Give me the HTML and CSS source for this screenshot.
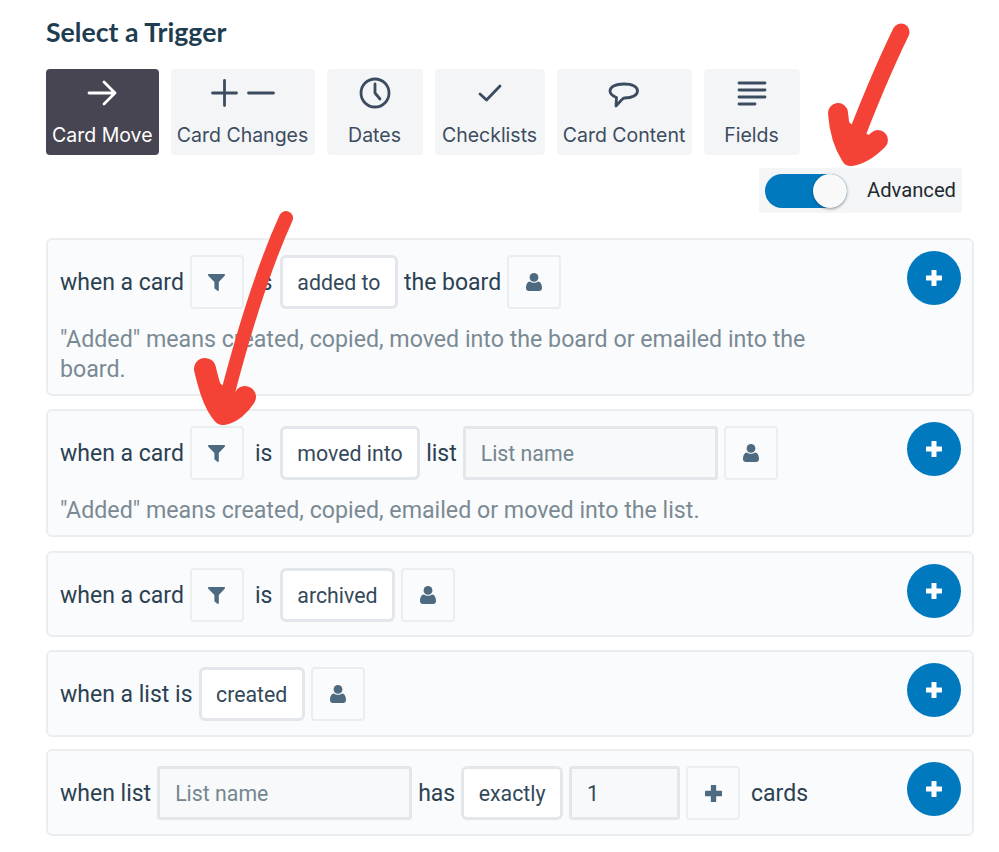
FILE: index.html
```html
<!DOCTYPE html>
<html lang="en">
<head>
<meta charset="utf-8">
<title>Select a Trigger</title>
<link rel="stylesheet" href="styles.css">
</head>
<body>
<svg class="defs" width="0" height="0" aria-hidden="true">
  <symbol id="i-person" viewBox="0 0 16 18"><circle cx="8" cy="4.4" r="4.4"/><path d="M0 15c0-4 1.6-6.4 4-6.6 1 .9 2.500 1.300 4 1.300s3-.4 4-1.300c2.400.2 4 2.600 4 6.600 0 1.900-1.200 3-3 3H3c-1.800 0-3-1.100-3-3z"/></symbol>
  <symbol id="i-filter" viewBox="0 0 17 17"><path d="M1 0h15c.9 0 1.300 1 .7 1.700L10.800 8v8c0 .8-.8 1.200-1.400.8l-2.500-2c-.3-.2-.5-.5-.5-.8V8L.3 1.700C-.3 1 .1 0 1 0z"/></symbol>
  <symbol id="i-plus" viewBox="0 0 16 16"><path d="M8 1v14M1 8h14" fill="none" stroke="currentColor" stroke-width="5" stroke-linecap="round"/></symbol>
</svg>
<main class="page">
  <h1 class="title">Select a Trigger</h1>
  <nav class="tabs">
    <div class="tab tab--active">
      <svg class="tab-icon" width="36" height="36" viewBox="0 0 36 36"><path d="M5 18h26M20 7l11 11-11 11"/></svg>
      <span>Card Move</span>
    </div>
    <div class="tab tab--changes">
      <svg class="tab-icon" width="68" height="36" viewBox="0 0 68 36"><path d="M3.500 18h24M15.500 5.500v25M39.500 18h25"/></svg>
      <span>Card Changes</span>
    </div>
    <div class="tab">
      <svg class="tab-icon" width="36" height="36" viewBox="0 0 36 36"><circle cx="18" cy="18" r="14"/><path d="M18 9v9l5 6"/></svg>
      <span>Dates</span>
    </div>
    <div class="tab tab--checks">
      <svg class="tab-icon" width="36" height="36" viewBox="0 0 36 36"><path d="M8 19l6.500 6L28 11"/></svg>
      <span>Checklists</span>
    </div>
    <div class="tab tab--content">
      <svg class="tab-icon" width="36" height="36" viewBox="0 0 36 36"><path d="M10 31l.5-8.500C6.500 21 4 19 4 16c0-4 5-7 14-7s13.500 3 13.500 7-5 7-13 7c-2 0-4 3.500-8.500 8z"/></svg>
      <span>Card Content</span>
    </div>
    <div class="tab">
      <svg class="tab-icon" width="36" height="36" viewBox="0 0 36 36"><path d="M5 8h26M5 15h26M5 22h26M5 29h16"/></svg>
      <span>Fields</span>
    </div>
  </nav>
  <div class="advanced-row">
    <div class="advanced">
      <span class="switch"><span class="switch-knob"></span></span>
      <span class="advanced-label">Advanced</span>
    </div>
  </div>

  <section class="card">
    <div class="card-body">
      <div class="row">
        <span>when a card</span>
        <span class="chip"><svg class="glyph"><use href="#i-filter"/></svg></span>
        <span class="word">is</span>
        <span class="select">added to</span>
        <span>the board</span>
        <span class="chip"><svg class="glyph glyph--person"><use href="#i-person"/></svg></span>
      </div>
      <p class="note">"Added" means created, copied, moved into the board or emailed into the board.</p>
    </div>
    <span class="add"><svg class="add-plus"><use href="#i-plus"/></svg></span>
  </section>

  <section class="card">
    <div class="card-body">
      <div class="row">
        <span>when a card</span>
        <span class="chip"><svg class="glyph"><use href="#i-filter"/></svg></span>
        <span class="word">is</span>
        <span class="select">moved into</span>
        <span>list</span>
        <input class="field" placeholder="List name">
        <span class="chip"><svg class="glyph glyph--person"><use href="#i-person"/></svg></span>
      </div>
      <p class="note">"Added" means created, copied, emailed or moved into the list.</p>
    </div>
    <span class="add"><svg class="add-plus"><use href="#i-plus"/></svg></span>
  </section>

  <section class="card card--push">
    <div class="card-body">
      <div class="row">
        <span>when a card</span>
        <span class="chip"><svg class="glyph"><use href="#i-filter"/></svg></span>
        <span class="word">is</span>
        <span class="select">archived</span>
        <span class="chip"><svg class="glyph glyph--person"><use href="#i-person"/></svg></span>
      </div>
    </div>
    <span class="add"><svg class="add-plus"><use href="#i-plus"/></svg></span>
  </section>

  <section class="card card--tall card--short-gap">
    <div class="card-body">
      <div class="row">
        <span>when a list is</span>
        <span class="select">created</span>
        <span class="chip"><svg class="glyph glyph--person"><use href="#i-person"/></svg></span>
      </div>
    </div>
    <span class="add"><svg class="add-plus"><use href="#i-plus"/></svg></span>
  </section>

  <section class="card card--tall">
    <div class="card-body">
      <div class="row">
        <span>when list</span>
        <input class="field" placeholder="List name">
        <span>has</span>
        <span class="select">exactly</span>
        <input class="field field--count" value="1">
        <span class="chip"><svg class="glyph glyph--plus"><use href="#i-plus"/></svg></span>
        <span class="word">cards</span>
      </div>
    </div>
    <span class="add"><svg class="add-plus"><use href="#i-plus"/></svg></span>
  </section>
</main>

<svg class="annotations" width="999" height="852" viewBox="0 0 999 852" aria-hidden="true">
  <path class="mark" stroke-width="17" d="M901 32C885 65 868 105 851 150"/>
  <path class="mark" stroke-width="20" d="M838 113C839 128 842 142 851 156C860 155 870 148 878 140"/>
  <path class="mark-fill" d="M838 113L851 156L878 140L856 128z"/>
  <path class="mark" stroke-width="14" d="M286 218C266 262 244 330 226 400"/>
  <path class="mark" stroke-width="22" d="M205 369C209 385 213 402 223 414C231 413 240 405 245 397"/>
  <path class="mark-fill" d="M205 369L223 414L245 397L222 385z"/>
</svg>
</body>
</html>
```

FILE: styles.css
```css
* { box-sizing: border-box; }

html, body { margin: 0; padding: 0; background: #fff; }

body {
  position: relative;
  width: 999px;
  height: 852px;
  overflow: hidden;
  font-family: Roboto, "Liberation Sans", sans-serif;
  color: #2b4152;
}

.defs { position: absolute; }

.page {
  width: 928px;
  margin-left: 46px;
  padding-top: 16px;
}

.title {
  margin: 0 0 21px;
  font: 700 26.700px/32px Lato, "Liberation Sans", sans-serif;
  color: #1f3d50;
}

.tabs { display: flex; gap: 12px; }

.tab {
  display: flex;
  flex-direction: column;
  align-items: center;
  min-width: 96px;
  height: 86px;
  padding: 6px 6px 0;
  border-radius: 4px;
  background: #f4f5f6;
  color: #3c4c60;
  font: 400 19.500px/24px Inter, Roboto, sans-serif;
  white-space: nowrap;
}

.tab--active { background: #474551; color: #fff; }
.tab--changes { min-width: 144px; }
.tab--checks { min-width: 110px; }
.tab--content { min-width: 135px; }

.tab-icon {
  display: block;
  margin-bottom: 12px;
  fill: none;
  stroke: currentColor;
  stroke-width: 2.800;
  stroke-linecap: round;
  stroke-linejoin: round;
}

.advanced-row {
  display: flex;
  justify-content: flex-end;
  padding-right: 12px;
  margin: 13px 0 25px;
}

.advanced {
  display: flex;
  align-items: center;
  gap: 20px;
  width: 203px;
  height: 45px;
  padding-left: 6px;
  border-radius: 3px;
  background: #f4f5f6;
  color: #1e2a30;
  font-size: 20.200px;
}

.advanced-label { margin-bottom: 2px; }

.switch {
  position: relative;
  display: block;
  width: 82px;
  height: 34px;
  border-radius: 17px;
  background: #0079bf;
}

.switch-knob {
  position: absolute;
  right: 0;
  top: 0;
  width: 34px;
  height: 34px;
  border-radius: 50%;
  background: #f9f9f9;
  box-shadow: 0 1px 3px rgba(0, 0, 0, .4);
}

.card {
  display: flex;
  align-items: flex-start;
  margin-bottom: 13px;
  padding: 15px 11px 13px 12px;
  border: 2px solid #ebeef1;
  border-radius: 6px;
  background: #fafbfc;
}

.card--push { margin-top: 14px; }
.card--tall { padding-bottom: 14px; }
.card--short-gap { margin-bottom: 12px; }

.card-body { flex: 1; min-width: 0; }

.row {
  display: flex;
  align-items: center;
  gap: 6px;
  height: 54px;
  font-size: 23px;
  white-space: nowrap;
}

.word { margin: 0 1.500px 0 5px; }

.chip {
  display: flex;
  align-items: center;
  justify-content: center;
  width: 54px;
  height: 54px;
  border: 2px solid #ebeef1;
  border-radius: 4px;
  color: #4d6a80;
}

.glyph { width: 17px; height: 17px; fill: currentColor; }
.glyph--person { width: 16px; height: 18px; }

.select {
  display: flex;
  align-items: center;
  height: 54px;
  padding: 0 14.500px;
  border: 3px solid #e3e6ea;
  border-radius: 6px;
  background: #fff;
  color: #34495a;
  font-size: 21.300px;
}

.field {
  width: 255px;
  height: 54px;
  padding: 0 15px;
  border: 3px solid #e3e6ea;
  border-radius: 3px;
  background: #f7f9fa;
  color: #34495a;
  font: 400 21.300px Roboto, sans-serif;
  outline: none;
}

.field::placeholder { color: #75868f; opacity: 1; }
.field--count { width: 111px; }

.note {
  width: 790px;
  margin: 15px 0 -3px;
  color: #7a8a94;
  font-size: 23.200px;
  line-height: 30px;
}

.add {
  flex: none;
  display: flex;
  align-items: center;
  justify-content: center;
  width: 54px;
  height: 54px;
  margin-top: -4px;
  border-radius: 50%;
  background: #0079bf;
  color: #fff;
}

.add-plus { width: 16px; height: 16px; }

.annotations { position: absolute; left: 0; top: 0; pointer-events: none; }

.mark {
  fill: none;
  stroke: #f44336;
  stroke-linecap: round;
  stroke-linejoin: round;
}

.mark-fill { fill: #f44336; }
```
